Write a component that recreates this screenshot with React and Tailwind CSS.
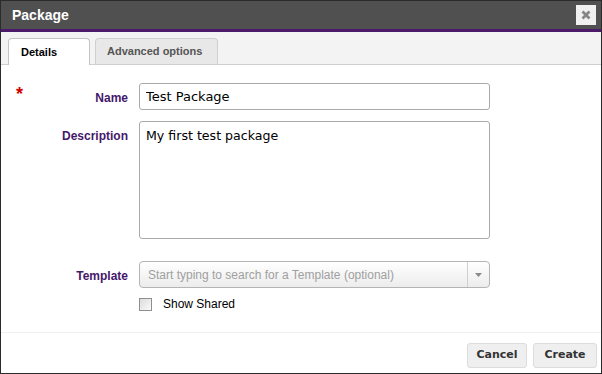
import { useState } from 'react';

export default function App() {
  const [name, setName] = useState('Test Package');
  const [desc, setDesc] = useState('My first test package');

  return (
    <div className="w-[602px] h-[374px] bg-white border border-[#2b2b2b] flex flex-col font-['Liberation_Sans',Arial,sans-serif] overflow-hidden">
      {/* Title bar */}
      <div className="h-[28px] bg-[#505050] flex items-center justify-between pl-[11px] pr-[5px] shrink-0">
        <span className="text-white text-[14px] font-bold">Package</span>
        <button className="w-[20px] h-[20px] bg-[#f0f0f0] flex items-center justify-center">
          <svg width="10" height="10" viewBox="0 0 10 10">
            <path d="M1.5 1.5 L8.5 8.5 M8.5 1.5 L1.5 8.5" stroke="#858585" strokeWidth="2.8" />
          </svg>
        </button>
      </div>
      <div className="h-[3px] bg-[#4b1a6b] shrink-0" />

      {/* Tabs */}
      <div className="h-[33px] bg-[#f3f3f3] border-b border-[#cfcfcf] flex items-end gap-[5px] pl-[7px] shrink-0">
        <div className="w-[82px] h-[27px] bg-white border border-[#c4c4c4] border-b-0 rounded-t-[4px] -mb-px flex items-center pl-[12px] text-[11px] font-bold text-black">
          Details
        </div>
        <div className="w-[123px] h-[26px] bg-[#e8e8e8] border border-[#cfcfcf] border-b-0 rounded-t-[4px] flex items-center pl-[11px] text-[11px] font-bold text-[#555]">
          Advanced options
        </div>
      </div>

      {/* Form */}
      <div className="flex-1 flex flex-col pt-[18px] gap-[11px]">
        <div className="flex items-start">
          <div className="w-[127px] relative flex justify-end pt-[6px]">
            <span className="absolute left-[15px] top-[2px] text-[#d40000] text-[18px] font-bold leading-none">*</span>
            <span className="text-[12px] font-bold text-[#45186a]">Name</span>
          </div>
          <input
            value={name}
            onChange={(e) => setName(e.target.value)}
            className="ml-[11px] w-[351px] h-[27px] border border-[#aaa] rounded-[3px] px-[6px] text-[13px] font-['DejaVu_Sans',Verdana,sans-serif] text-black outline-none"
          />
        </div>
        <div className="flex items-start">
          <div className="w-[127px] flex justify-end pt-[6px]">
            <span className="text-[12px] font-bold text-[#45186a]">Description</span>
          </div>
          <textarea
            value={desc}
            onChange={(e) => setDesc(e.target.value)}
            className="ml-[11px] w-[351px] h-[118px] border border-[#aaa] rounded-[3px] px-[6px] pt-[5px] text-[12.6px] font-['DejaVu_Sans',Verdana,sans-serif] text-black outline-none resize-none"
          />
        </div>
        <div className="flex items-start mt-[11px]">
          <div className="w-[127px] flex justify-end pt-[6px]">
            <span className="text-[12px] font-bold text-[#45186a]">Template</span>
          </div>
          <div className="ml-[11px] flex flex-col gap-[7px]">
            <div className="w-[351px] h-[27px] border border-[#b4b4b4] rounded-[4px] bg-gradient-to-b from-white to-[#ececec] flex items-center">
              <span className="flex-1 pl-[8px] text-[12px] text-[#a0a0a0]">Start typing to search for a Template (optional)</span>
              <div className="w-[22px] h-full border-l border-[#cfcfcf] flex items-center justify-center">
                <svg width="7" height="4" viewBox="0 0 7 4"><path d="M0 0 H7 L3.5 4 Z" fill="#8a8a8a" /></svg>
              </div>
            </div>
            <label className="flex items-center gap-[11px]">
              <span className="w-[13px] h-[13px] border border-[#8f8f8f] bg-gradient-to-br from-[#dcdcdc] to-[#fafafa]" />
              <span className="text-[12px] text-black">Show Shared</span>
            </label>
          </div>
        </div>
      </div>

      {/* Footer */}
      <div className="h-[41px] border-t border-[#f0f0f0] flex items-start justify-end gap-[6px] pr-[4px] pt-[10px] shrink-0">
        <button className="w-[60px] h-[25px] bg-[#efefef] border border-[#dcdcdc] rounded-[3px] text-[11px] font-bold text-[#333] font-['DejaVu_Sans',Tahoma,sans-serif]">
          Cancel
        </button>
        <button className="w-[64px] h-[25px] bg-[#efefef] border border-[#dcdcdc] rounded-[3px] text-[11px] font-bold text-[#333] font-['DejaVu_Sans',Tahoma,sans-serif]">
          Create
        </button>
      </div>
    </div>
  );
}
